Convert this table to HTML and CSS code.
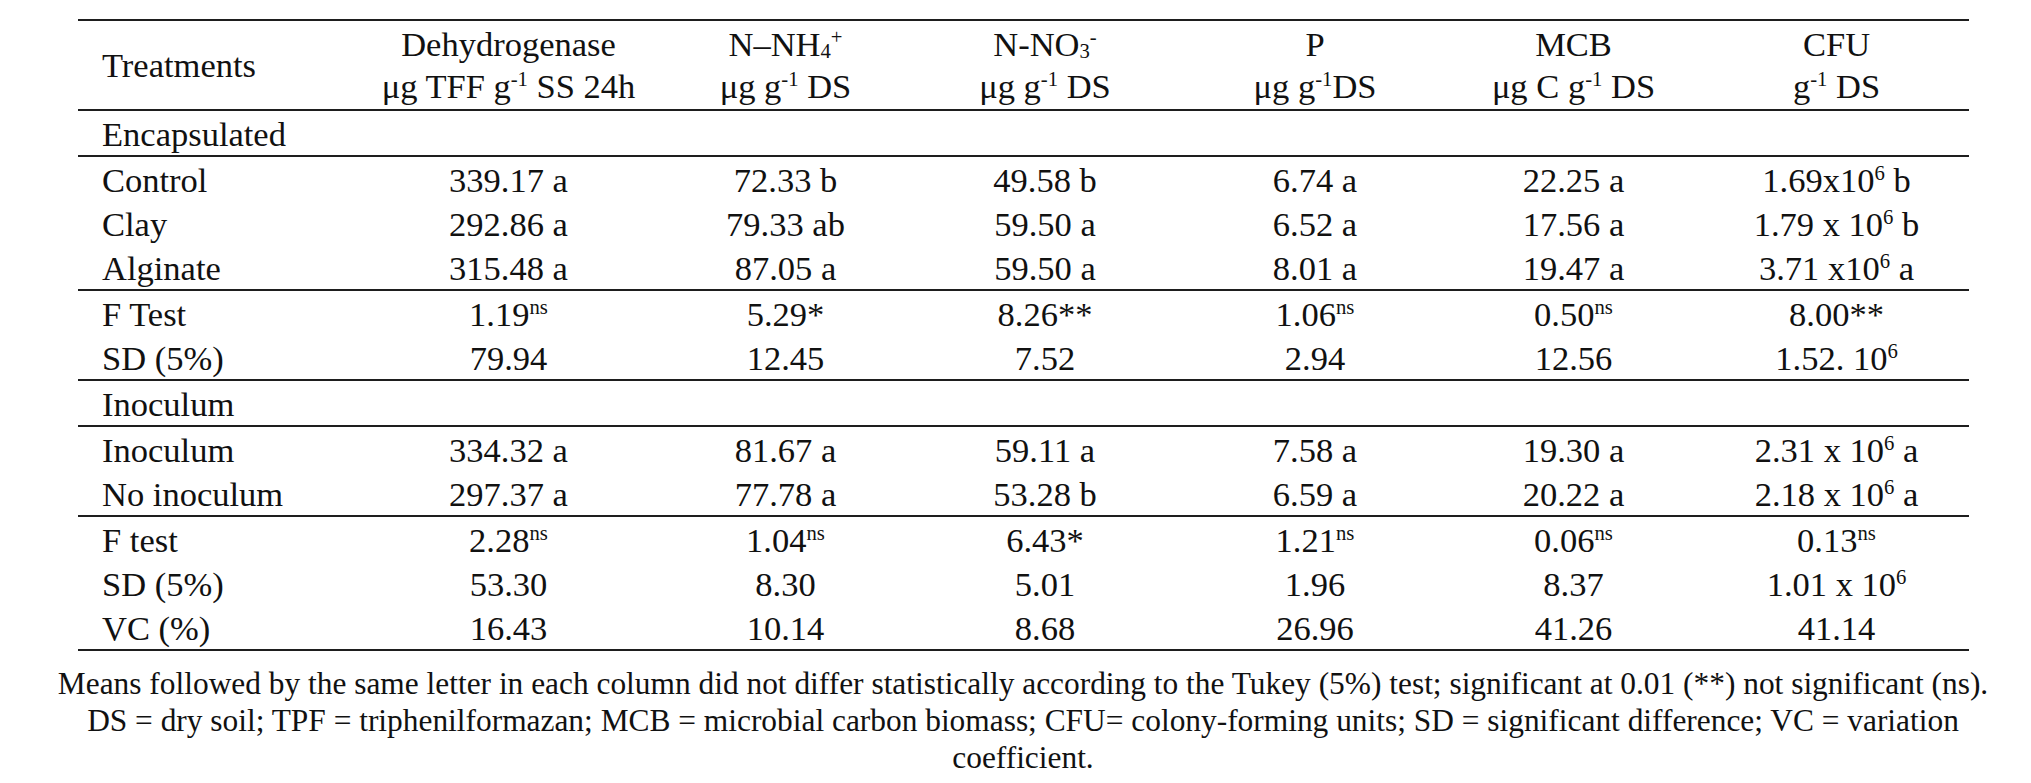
FILE: index.html
```html
<!DOCTYPE html>
<html lang="en">
<head>
<meta charset="utf-8">
<title>Treatments table</title>
<link rel="stylesheet" href="styles.css">
</head>
<body>
<main class="page">
  <table class="data">
    <colgroup>
      <col class="c-treat"><col class="c-dh"><col class="c-nh"><col class="c-no"><col class="c-p"><col class="c-mcb"><col class="c-cfu">
    </colgroup>
    <thead>
      <tr>
        <th class="lbl">Treatments</th>
        <th>Dehydrogenase<br>μg TFF g<sup>-1</sup> SS 24h</th>
        <th>N–NH<sub>4</sub><sup>+</sup><br>μg g<sup>-1</sup> DS</th>
        <th>N-NO<sub>3</sub><sup>-</sup><br>μg g<sup>-1</sup> DS</th>
        <th>P<br>μg g<sup>-1</sup>DS</th>
        <th>MCB<br>μg C g<sup>-1</sup> DS</th>
        <th>CFU<br>g<sup>-1</sup> DS</th>
      </tr>
    </thead>
    <tbody>
      <tr class="end"><td class="lbl">Encapsulated</td><td></td><td></td><td></td><td></td><td></td><td></td></tr>
      <tr><td class="lbl">Control</td><td>339.17 a</td><td>72.33 b</td><td>49.58 b</td><td>6.74 a</td><td>22.25 a</td><td>1.69x10<sup>6</sup> b</td></tr>
      <tr><td class="lbl">Clay</td><td>292.86 a</td><td>79.33 ab</td><td>59.50 a</td><td>6.52 a</td><td>17.56 a</td><td>1.79 x 10<sup>6</sup> b</td></tr>
      <tr class="end"><td class="lbl">Alginate</td><td>315.48 a</td><td>87.05 a</td><td>59.50 a</td><td>8.01 a</td><td>19.47 a</td><td>3.71 x10<sup>6</sup> a</td></tr>
      <tr><td class="lbl">F Test</td><td>1.19<sup>ns</sup></td><td>5.29*</td><td>8.26**</td><td>1.06<sup>ns</sup></td><td>0.50<sup>ns</sup></td><td>8.00**</td></tr>
      <tr class="end"><td class="lbl">SD (5%)</td><td>79.94</td><td>12.45</td><td>7.52</td><td>2.94</td><td>12.56</td><td>1.52. 10<sup>6</sup></td></tr>
      <tr class="end"><td class="lbl">Inoculum</td><td></td><td></td><td></td><td></td><td></td><td></td></tr>
      <tr><td class="lbl">Inoculum</td><td>334.32 a</td><td>81.67 a</td><td>59.11 a</td><td>7.58 a</td><td>19.30 a</td><td>2.31 x 10<sup>6</sup> a</td></tr>
      <tr class="end"><td class="lbl">No inoculum</td><td>297.37 a</td><td>77.78 a</td><td>53.28 b</td><td>6.59 a</td><td>20.22 a</td><td>2.18 x 10<sup>6</sup> a</td></tr>
      <tr><td class="lbl">F test</td><td>2.28<sup>ns</sup></td><td>1.04<sup>ns</sup></td><td>6.43*</td><td>1.21<sup>ns</sup></td><td>0.06<sup>ns</sup></td><td>0.13<sup>ns</sup></td></tr>
      <tr><td class="lbl">SD (5%)</td><td>53.30</td><td>8.30</td><td>5.01</td><td>1.96</td><td>8.37</td><td>1.01 x 10<sup>6</sup></td></tr>
      <tr class="end"><td class="lbl">VC (%)</td><td>16.43</td><td>10.14</td><td>8.68</td><td>26.96</td><td>41.26</td><td>41.14</td></tr>
    </tbody>
  </table>
  <p class="note">Means followed by the same letter in each column did not differ statistically according to the Tukey (5%) test; significant at 0.01 (**) not significant (ns). DS = dry soil; TPF = triphenilformazan; MCB = microbial carbon biomass; CFU= colony-forming units; SD = significant difference; VC = variation coefficient.</p>
</main>
</body>
</html>
```

FILE: styles.css
```css
html, body {
  margin: 0;
  background: #ffffff;
}

body {
  color: #111111;
  font-family: "Liberation Serif", "Times New Roman", serif;
}

.page {
  padding: 19px 62px 0 78px;
}

.data {
  width: 1891px;
  table-layout: fixed;
  border-collapse: collapse;
  font-size: 34.5px;
}

.c-treat { width: 271px; }
.c-dh { width: 319px; }
.c-nh { width: 235px; }
.c-no { width: 284px; }
.c-p { width: 256px; }
.c-mcb { width: 261px; }
.c-cfu { width: 265px; }

.data th,
.data td {
  font-weight: 400;
  text-align: center;
  padding: 3px 0 1px;
  line-height: 40px;
  white-space: nowrap;
}

.data thead tr {
  border-top: 2px solid #1e1e1e;
  border-bottom: 2px solid #1e1e1e;
}

.data thead th {
  padding: 2px 0 2px;
  line-height: 42px;
  vertical-align: middle;
}

.data .lbl {
  text-align: left;
  padding-left: 24px;
}

.data tr.end {
  border-bottom: 2px solid #1e1e1e;
}

sup {
  font-size: 0.6em;
  line-height: 0;
  vertical-align: 0.6em;
}

sub {
  font-size: 0.6em;
  line-height: 0;
  vertical-align: -0.08em;
}

.note {
  margin: 14px -39px 0 -40px;
  text-align: center;
  font-size: 31.4px;
  line-height: 37px;
}
```
